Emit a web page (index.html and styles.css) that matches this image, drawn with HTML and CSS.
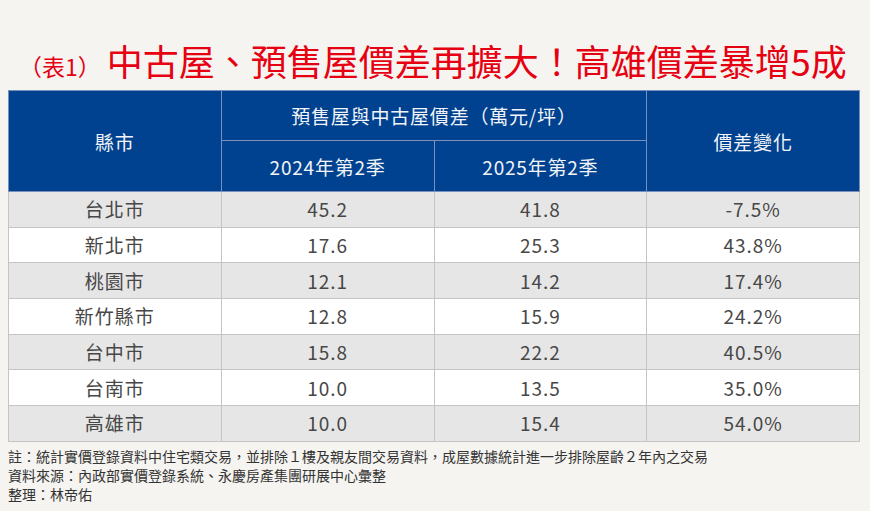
FILE: index.html
```html
<!DOCTYPE html>
<html lang="zh-Hant">
<head>
<meta charset="utf-8">
<link rel="stylesheet" href="styles.css">
</head>
<body>
<div class="page">
  <h1 class="title"><span class="tag">（表1）</span>中古屋、預售屋價差再擴大！高雄價差暴增5成</h1>
  <table class="grid">
    <colgroup><col><col><col><col></colgroup>
    <thead>
      <tr class="h1row">
        <th rowspan="2">縣市</th>
        <th colspan="2">預售屋與中古屋價差（萬元/坪）</th>
        <th rowspan="2">價差變化</th>
      </tr>
      <tr class="h2row">
        <th>2024年第2季</th>
        <th>2025年第2季</th>
      </tr>
    </thead>
    <tbody>
      <tr class="odd"><td>台北市</td><td>45.2</td><td>41.8</td><td>-7.5%</td></tr>
      <tr><td>新北市</td><td>17.6</td><td>25.3</td><td>43.8%</td></tr>
      <tr class="odd"><td>桃園市</td><td>12.1</td><td>14.2</td><td>17.4%</td></tr>
      <tr><td>新竹縣市</td><td>12.8</td><td>15.9</td><td>24.2%</td></tr>
      <tr class="odd"><td>台中市</td><td>15.8</td><td>22.2</td><td>40.5%</td></tr>
      <tr><td>台南市</td><td>10.0</td><td>13.5</td><td>35.0%</td></tr>
      <tr class="odd"><td>高雄市</td><td>10.0</td><td>15.4</td><td>54.0%</td></tr>
    </tbody>
  </table>
  <div class="notes">
    <p class="note">註：統計實價登錄資料中住宅類交易，並排除１樓及親友間交易資料，成屋數據統計進一步排除屋齡２年內之交易</p>
    <p class="note">資料來源：內政部實價登錄系統、永慶房產集團研展中心彙整</p>
    <p class="note">整理：林帝佑</p>
  </div>
</div>
</body>
</html>
```

FILE: styles.css
```css
html, body {
  margin: 0;
  padding: 0;
  background: #f5f4f1;
}
body {
  font-family: "Noto Sans CJK TC", "Noto Sans", sans-serif;
  width: 870px;
  height: 511px;
  overflow: hidden;
}
.page {
  padding: 0 10px 0 8px;
}
.title {
  margin: 0;
  height: 90px;
  box-sizing: border-box;
  padding-top: 42px;
  padding-left: 11px;
  font-size: 36px;
  line-height: 36px;
  font-weight: 400;
  color: #e60012;
  white-space: nowrap;
}
.tag {
  font-size: 23px;
  margin-right: 6px;
}
.grid {
  width: 852px;
  border-collapse: collapse;
  table-layout: fixed;
}
.grid th {
  background: #00428f;
  color: #f2f4f8;
  font-weight: 400;
  font-size: 19px;
  letter-spacing: 0.8px;
  border: 1px solid #7990bd;
  padding: 0;
  text-align: center;
}
.h1row { height: 50px; }
.h2row { height: 51px; }
.grid tbody tr { height: 35.7px; }
.grid td {
  padding: 0;
  text-align: center;
  font-size: 19px;
  line-height: 20px;
  color: #474747;
  border: 1px solid #c4c4c4;
  background: #ffffff;
  letter-spacing: 1px;
}
.grid tr.odd td { background: #e6e6e6; }
.notes {
  padding-top: 5px;
}
.note {
  margin: 0;
  font-size: 14px;
  line-height: 19px;
  color: #333333;
  white-space: nowrap;
}
```
